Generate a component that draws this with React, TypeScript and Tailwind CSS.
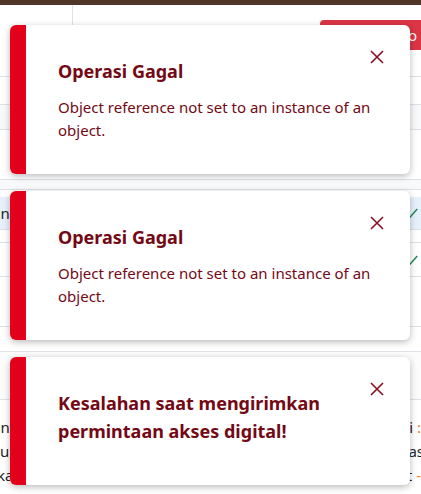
import React from "react";

interface Toast {
  id: number;
  title: string;
  message?: string;
}

const toasts: Toast[] = [
  { id: 1, title: "Operasi Gagal", message: "Object reference not set to an instance of an object." },
  { id: 2, title: "Operasi Gagal", message: "Object reference not set to an instance of an object." },
  { id: 3, title: "Kesalahan saat mengirimkan permintaan akses digital!" },
];

const Check = () => (
  <svg width="14" height="14" viewBox="0 0 16 16" className="text-[#198754]">
    <path d="M2 8.5l4 4 8-9" fill="none" stroke="currentColor" strokeWidth="1.6" />
  </svg>
);

const ToastCard = ({ toast }: { toast: Toast }) => (
  <div className="relative flex w-[400px] overflow-hidden rounded-[6px] bg-white shadow-[0_2px_7px_rgba(0,0,0,0.28)]">
    <div className="w-[16px] shrink-0 bg-[#e2001a]" />
    <div className="w-[352px] pl-[32px] pt-[32px] pb-[32px] text-[#740814]">
      <h3 className="mb-2 text-[18px] font-bold leading-[28px]">{toast.title}</h3>
      {toast.message && <p className="pt-[3px] text-[15px] leading-[23px]">{toast.message}</p>}
    </div>
    <button className="absolute right-[26px] top-[25px] flex h-[14px] w-[14px] items-center justify-center text-[#8a1020]">
      <svg width="14" height="14" viewBox="0 0 14 14">
        <path d="M1 1l12 12M13 1L1 13" stroke="currentColor" strokeWidth="1.6" fill="none" />
      </svg>
    </button>
  </div>
);

export default function App() {
  return (
    <div className="relative h-[494px] w-[421px] overflow-hidden bg-white font-['Segoe_UI','Noto_Sans',sans-serif] text-[15px] text-[#212529]">
      <div className="h-[5px] bg-[#4f3629]" />
      <div className="flex h-[72px] border-b border-[#dee2e6]">
        <div className="w-[73px] border-r border-[#dee2e6]" />
        <div className="flex flex-1 justify-end overflow-hidden pt-[15px]">
          <button className="mr-[-12px] h-[30px] w-[113px] rounded-[4px] bg-[#dc3545] pr-[16px] text-right text-[15px] text-white">
            Tambah Info
          </button>
        </div>
      </div>
      <div className="h-[28px] border-b border-[#dee2e6]" />
      <div className="h-[25px] border-b border-[#dee2e6] bg-[#f8f9fa]" />
      <div className="h-[50px] border-b border-[#dee2e6]" />
      <div className="h-[10px] border-b border-[#dee2e6] bg-[#f8f9fa]" />
      <div className="h-[7px]" />
      <div className="flex h-[33px] items-center justify-between border-b border-[#dee2e6] bg-[#e7f1fb] pr-[2px]">
        <span className="-ml-[54px] whitespace-nowrap">Pengguna</span>
        <Check />
      </div>
      <div className="h-[13px] border-b border-[#dee2e6]" />
      <div className="flex h-[34px] items-center justify-end border-b border-[#dee2e6] pr-[2px]">
        <Check />
      </div>
      <div className="h-[50px] border-b border-[#dee2e6]" />
      <div className="h-[25px] border-b border-[#dee2e6]" />
      <div className="h-[48px] border-b border-[#dee2e6] bg-[#fcfcfd]" />
      <div className="pt-[15px] leading-[24px]">
        <div className="flex justify-between whitespace-nowrap">
          <span className="-ml-[19px]">Hanya</span>
          <span>Lokasi <span className="text-[#fd7e14]">:</span></span>
        </div>
        <div className="flex justify-between whitespace-nowrap">
          <span>u,</span>
          <span className="-mr-[3px]">Kelas</span>
        </div>
        <div className="flex justify-between whitespace-nowrap">
          <span className="-ml-[3px]">ka</span>
          <span>Catat <span className="text-[#fd7e14]">-</span></span>
        </div>
      </div>

      <div className="absolute left-[10px] top-[25px] flex flex-col gap-[17px]">
        {toasts.map((t) => (
          <ToastCard key={t.id} toast={t} />
        ))}
      </div>
    </div>
  );
}
